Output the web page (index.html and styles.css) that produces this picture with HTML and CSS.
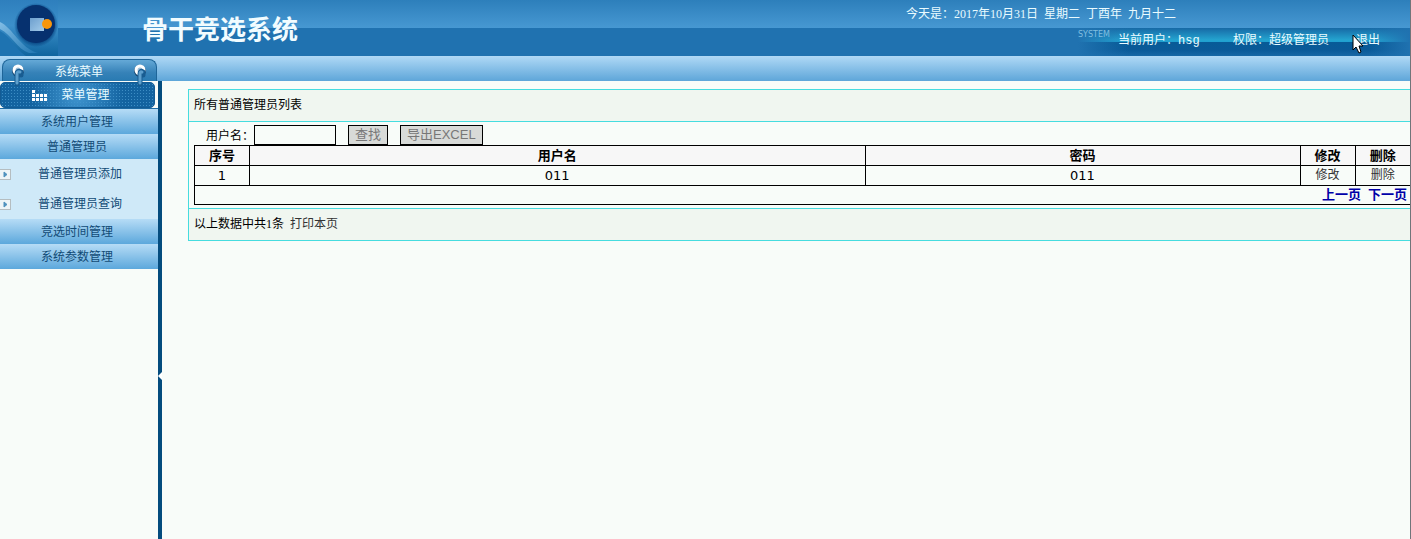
FILE: index.html
```html
<!DOCTYPE html>
<html lang="zh-CN">
<head>
    <meta charset="UTF-8">
    <meta name="viewport" content="width=device-width, initial-scale=1.0">
    <title>骨干竞选系统</title>
    <link rel="stylesheet" href="styles.css">
</head>
<body>
<div class="page">
    <header class="header">
        <svg class="logo" width="58" height="56" viewBox="0 0 58 56" aria-hidden="true">
            <defs>
                <linearGradient id="logoBg" x1="0" y1="0" x2="0" y2="1">
                    <stop offset="0" stop-color="#2e7fbd"/>
                    <stop offset=".45" stop-color="#3c8fca"/>
                    <stop offset="1" stop-color="#0f659f"/>
                </linearGradient>
                <linearGradient id="logoSwoosh" x1="0" y1="0" x2="1" y2="1">
                    <stop offset="0" stop-color="#82bde5"/>
                    <stop offset="1" stop-color="#1f76b2"/>
                </linearGradient>
                <linearGradient id="logoSquare" x1="0" y1="0" x2="1" y2="1">
                    <stop offset="0" stop-color="#6d9fce"/>
                    <stop offset="1" stop-color="#a3cbea"/>
                </linearGradient>
                <radialGradient id="logoShade">
                    <stop offset=".8" stop-color="#0a4986"/>
                    <stop offset="1" stop-color="#0a4986" stop-opacity="0"/>
                </radialGradient>
            </defs>
            <rect width="58" height="56" fill="url(#logoBg)"/>
            <path d="M0 22C13 28 20 48 38 53H29C17 49 12 35 0 29Z" fill="url(#logoSwoosh)"/>
            <path d="M0 31C10 36 15 49 26 56H0Z" fill="#1e73b1"/>
            <circle cx="36" cy="25" r="22" fill="url(#logoShade)"/>
            <circle cx="36" cy="24" r="19" fill="#06316f"/>
            <rect x="30" y="18" width="14" height="13" fill="url(#logoSquare)"/>
            <circle cx="47" cy="24" r="5" fill="#f8960d"/>
        </svg>
        <h1 class="title">骨干竞选系统</h1>
        <div class="info">
            <p class="date">
                <span>今天是：2017年10月31日</span>
                <span>星期二</span>
                <span>丁酉年</span>
                <span>九月十二</span>
            </p>
            <div class="user">
                <span class="user-tag">SYSTEM</span>
                <span class="user-name">当前用户：<span class="login">hsg</span></span>
                <span class="user-role">权限：超级管理员</span>
                <a class="logout" href="#">退出</a>
                <svg class="cursor" width="13" height="21" viewBox="0 0 13 21" aria-hidden="true">
                    <path d="M1 1V16L4 13L7 19L9 18L7 12H11Z" fill="#fff" stroke="#000"/>
                </svg>
            </div>
        </div>
    </header>

    <div class="body">
        <aside class="sidebar">
            <div class="tab">
                系统菜单
                <svg class="ring ring-left" width="14" height="23" viewBox="0 0 14 23" aria-hidden="true">
                    <circle cx="7" cy="7" r="6" fill="#17466e"/>
                    <circle cx="7" cy="6" r="4" fill="#9fbfd6" stroke="#fff" stroke-width="3"/>
                    <path d="M6 20V10Q6 6 10 8V11" fill="none" stroke="#185c91" stroke-width="5" stroke-linecap="round"/>
                    <path d="M6 19V10Q6 7 9 8" fill="none" stroke="#5d9fcd" stroke-width="3" stroke-linecap="round"/>
                </svg>
                <svg class="ring ring-right" width="14" height="23" viewBox="0 0 14 23" aria-hidden="true">
                    <circle cx="7" cy="7" r="6" fill="#17466e"/>
                    <circle cx="7" cy="6" r="4" fill="#9fbfd6" stroke="#fff" stroke-width="3"/>
                    <path d="M7 20V10Q7 6 10 8V11" fill="none" stroke="#185c91" stroke-width="5" stroke-linecap="round"/>
                    <path d="M7 19V10Q7 7 9 8" fill="none" stroke="#5d9fcd" stroke-width="3" stroke-linecap="round"/>
                </svg>
            </div>
            <div class="menu-head">
                <svg width="15" height="11" viewBox="0 0 15 11" fill="#fff" aria-hidden="true">
                    <path d="M0 0h3v3H0zM0 4h3v3H0zM4 4h3v3H4zM8 4h3v3H8zM12 4h3v3h-3zM0 8h3v3H0zM4 8h3v3H4zM8 8h3v3H8zM12 8h3v3h-3z"/>
                </svg>
                菜单管理
            </div>
            <nav class="menu">
                <a class="menu-item" href="#">系统用户管理</a>
                <a class="menu-item" href="#">普通管理员</a>
                <a class="sub-item" href="#">
                    <svg class="arrow" width="11" height="11" viewBox="0 0 11 11" aria-hidden="true">
                        <rect x="-1" y=".5" width="11.5" height="10" fill="#edf5f7" stroke="#b5bdc0"/>
                        <path d="M4 3L7 5.500L4 8Z" fill="#4e91bd" stroke="#4e91bd"/>
                    </svg>
                    普通管理员添加
                </a>
                <a class="sub-item" href="#">
                    <svg class="arrow" width="11" height="11" viewBox="0 0 11 11" aria-hidden="true">
                        <rect x="-1" y=".5" width="11.5" height="10" fill="#edf5f7" stroke="#b5bdc0"/>
                        <path d="M4 3L7 5.500L4 8Z" fill="#4e91bd" stroke="#4e91bd"/>
                    </svg>
                    普通管理员查询
                </a>
                <a class="menu-item" href="#">竞选时间管理</a>
                <a class="menu-item" href="#">系统参数管理</a>
            </nav>
        </aside>

        <div class="content">
            <div class="bar"></div>
            <div class="frame">
                <div class="divider">
                    <svg class="divider-arrow" width="4" height="8" viewBox="0 0 4 8" aria-hidden="true">
                        <path d="M0 4L4 0V8Z" fill="#fff"/>
                    </svg>
                </div>
                <main class="panel">
                    <h2 class="panel-title">所有普通管理员列表</h2>
                    <div class="panel-body">
                        <form class="search">
                            <label for="username">用户名：</label>
                            <input class="field" id="username" type="text">
                            <button class="btn" type="button">查找</button>
                            <button class="btn" type="button">导出EXCEL</button>
                        </form>
                        <table class="list">
                            <colgroup>
                                <col class="col-small">
                                <col>
                                <col class="col-password">
                                <col class="col-small">
                                <col class="col-small">
                            </colgroup>
                            <thead>
                            <tr>
                                <th>序号</th>
                                <th>用户名</th>
                                <th>密码</th>
                                <th>修改</th>
                                <th>删除</th>
                            </tr>
                            </thead>
                            <tbody>
                            <tr>
                                <td>1</td>
                                <td>011</td>
                                <td>011</td>
                                <td><a class="action" href="#">修改</a></td>
                                <td><a class="action" href="#">删除</a></td>
                            </tr>
                            <tr>
                                <td colspan="5">
                                    <div class="pager">
                                        <a href="#">上一页</a>
                                        <a href="#">下一页</a>
                                    </div>
                                </td>
                            </tr>
                            </tbody>
                        </table>
                    </div>
                    <div class="panel-foot">
                        <span>以上数据中共1条</span>
                        <a class="action" href="#">打印本页</a>
                    </div>
                </main>
            </div>
        </div>
    </div>
</div>
</body>
</html>
```

FILE: styles.css
```css
* {
    box-sizing: border-box;
}

body {
    margin: 0;
    background: #f8fcf9;
    color: #000;
    font: 12px/20px "Liberation Serif", "Noto Sans CJK SC", serif;
}

h1, h2, p {
    margin: 0;
}

a {
    color: inherit;
    text-decoration: none;
}

.page {
    display: flex;
    flex-direction: column;
    min-height: 100vh;
    border-right: 1px solid #70757a;
}

/* header */
.header {
    display: flex;
    height: 56px;
    background: linear-gradient(#2d7fbb 0, #4798d2 28px, #2072b0 28px, #2072b0 100%);
    color: #e9fbff;
}

.logo {
    flex: none;
}

.title {
    flex: 1;
    padding-left: 84px;
    color: #f2fcff;
    font-size: 26px;
    font-weight: 600;
    line-height: 62px;
    white-space: nowrap;
}

.info {
    width: 504px;
    white-space: nowrap;
}

.date {
    display: flex;
    gap: 6px;
    height: 28px;
    line-height: 28px;
}

.user {
    position: relative;
    display: flex;
    height: 28px;
    margin-left: 172px;
    padding-right: 30px;
    line-height: 24px;
    background: linear-gradient(90deg, #2072b0 0, rgba(32, 114, 176, 0) 50px, rgba(32, 114, 176, 0) 290px, #2072b0 100%),
        linear-gradient(#1769a5 0, #24a4d0 12px, #1fa0d0 14px, #075b97 14px, #0a5a98 22px, #1768a6 100%);
}

.user-tag {
    width: 40px;
    color: #7fbfe0;
    font: 8px/14px "DejaVu Sans", sans-serif;
}

.login {
    font-family: "Liberation Mono", monospace;
}

.user-role {
    margin: 0 27px 0 auto;
}

.cursor {
    position: absolute;
    top: 6px;
    right: 45px;
}

/* sidebar */
.body {
    display: flex;
    flex: 1;
}

.sidebar {
    width: 158px;
    flex: none;
}

.tab {
    position: relative;
    z-index: 0;
    height: 25px;
    background: linear-gradient(#b0d9f6, #5ea6d9);
    color: #e9fbff;
    line-height: 32px;
    text-align: center;
}

/* rounded sheet behind the tab label */
.tab::before {
    content: "";
    position: absolute;
    z-index: -1;
    inset: 3px 1px 0 2px;
    border: 1px solid #1e6599;
    border-bottom: 0;
    border-radius: 8px 8px 0 0;
    background: linear-gradient(#65a9d7, #3682b8 60%, #287ab2);
}

.ring {
    position: absolute;
    top: 8px;
}

.ring-left {
    left: 11px;
}

.ring-right {
    right: 11px;
}

.menu-head {
    display: flex;
    align-items: center;
    justify-content: center;
    gap: 14px;
    height: 26px;
    margin: 1px 3px 0 0;
    padding-right: 13px;
    border: 1px solid #135b94;
    border-radius: 5px;
    background: radial-gradient(circle, #4095cf 0, rgba(64, 149, 207, 0) 60%),
        radial-gradient(#3d8dc4 1px, rgba(0, 0, 0, 0) 1px) 0 0 / 3px 3px,
        #1363a0;
    color: #e9fbff;
    line-height: 26px;
}

.menu {
    border-top: 1px solid #1d6ba5;
    color: #124b76;
}

.menu-item {
    display: block;
    height: 25px;
    padding-right: 4px;
    background: linear-gradient(#b6dcf6, #5ca8dc);
    line-height: 26px;
    text-align: center;
}

.sub-item {
    display: flex;
    align-items: center;
    gap: 27px;
    height: 30px;
    background: #cfe9f8;
}

/* content */
.content {
    display: flex;
    flex-direction: column;
    flex: 1;
    min-width: 0;
}

.bar {
    height: 25px;
    background: linear-gradient(#b0d9f6, #5ea6d9);
}

.frame {
    display: flex;
    flex: 1;
}

.divider {
    display: flex;
    align-items: center;
    width: 4px;
    padding-top: 132px;
    background: #044c7e;
}

.panel {
    flex: 1;
    align-self: flex-start;
    margin: 8px 0 0 26px;
    border: 1px solid #46dcdf;
    border-right: 0;
}

.panel-title,
.panel-foot {
    padding: 0 5px;
    background: #f0f6f0;
    font-size: 12px;
    font-weight: 400;
    line-height: 31px;
}

.panel-body {
    padding: 3px 0 3px 5px;
    border: 1px solid #46dcdf;
    border-width: 1px 0;
}

.panel-foot {
    display: flex;
    gap: 6px;
}

.search {
    display: flex;
    height: 20px;
    padding-left: 12px;
    line-height: 22px;
}

.field {
    width: 82px;
    height: 20px;
    margin-right: 12px;
    padding: 0 2px;
    border: 1px solid #000;
    background: #f8fcf9;
}

.btn {
    height: 20px;
    margin-right: 12px;
    padding: 0 6px;
    border: 1px solid #000;
    background: #d8dad8;
    color: #777;
    font: 13px/18px "Liberation Sans", "Noto Sans CJK SC", sans-serif;
}

.list {
    width: 100%;
    border-collapse: collapse;
    table-layout: fixed;
    font: 13px/19px "DejaVu Sans", "Noto Sans CJK SC", sans-serif;
    text-align: center;
}

.col-small {
    width: 55px;
}

.col-password {
    width: 435px;
}

.list th,
.list td {
    padding: 0;
    border: 1px solid #000;
    border-right: 0;
}

.list th {
    background: #f7f7f7;
}

.action {
    color: #333;
    font-size: 12px;
}

.list .action {
    display: block;
}

.pager {
    display: flex;
    justify-content: flex-end;
    gap: 7px;
    padding-right: 3px;
    color: #0000a8;
    font-weight: 700;
    line-height: 18px;
}
```
